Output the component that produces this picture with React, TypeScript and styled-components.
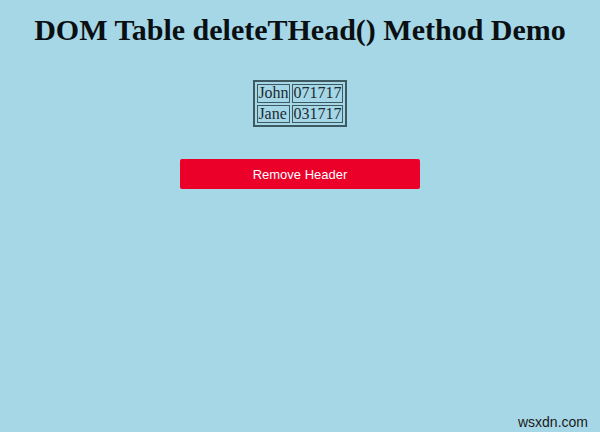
import { createGlobalStyle } from "styled-components";
import styled from "styled-components";

const GlobalStyle = createGlobalStyle`
  html, body {
    margin: 0;
    padding: 0;
    background: #a6d7e7;
  }
  body {
    font-family: "Liberation Serif", "Times New Roman", serif;
    color: #000;
  }
`;

const Page = styled.div`
  position: relative;
  width: 600px;
  height: 432px;
  display: flex;
  flex-direction: column;
  align-items: center;
  padding-top: 12px;
  box-sizing: border-box;
`;

const Title = styled.h1`
  margin: 0;
  font-size: 30px;
  font-weight: bold;
  line-height: 36px;
  text-align: center;
  color: #0a0f12;
`;

const Table = styled.table`
  margin-top: 32px;
  border: 2px solid #3d5a63;
  border-spacing: 2px;
  font-size: 16px;
  color: #1b2c33;
`;

const Cell = styled.td`
  border: 1px solid #3d5a63;
  padding: 0 0.5px;
  line-height: 16.5px;
`;

const RemoveButton = styled.button`
  margin-top: 32px;
  width: 240px;
  height: 30px;
  border: none;
  border-radius: 2px;
  background: #ea0029;
  color: #fff;
  font-family: "Liberation Sans", Arial, sans-serif;
  font-size: 13px;
  cursor: pointer;
`;

const Watermark = styled.span`
  position: absolute;
  right: 12px;
  bottom: 2px;
  font-family: "Liberation Sans", Arial, sans-serif;
  font-size: 14px;
  color: #1a1a1a;
`;

const rows = [
  ["John", "071717"],
  ["Jane", "031717"],
];

export default function App() {
  return (
    <>
      <GlobalStyle />
      <Page>
        <Title>DOM Table deleteTHead() Method Demo</Title>
        <Table>
          <tbody>
            {rows.map(([name, id]) => (
              <tr key={name}>
                <Cell>{name}</Cell>
                <Cell>{id}</Cell>
              </tr>
            ))}
          </tbody>
        </Table>
        <RemoveButton>Remove Header</RemoveButton>
        <Watermark>wsxdn.com</Watermark>
      </Page>
    </>
  );
}
